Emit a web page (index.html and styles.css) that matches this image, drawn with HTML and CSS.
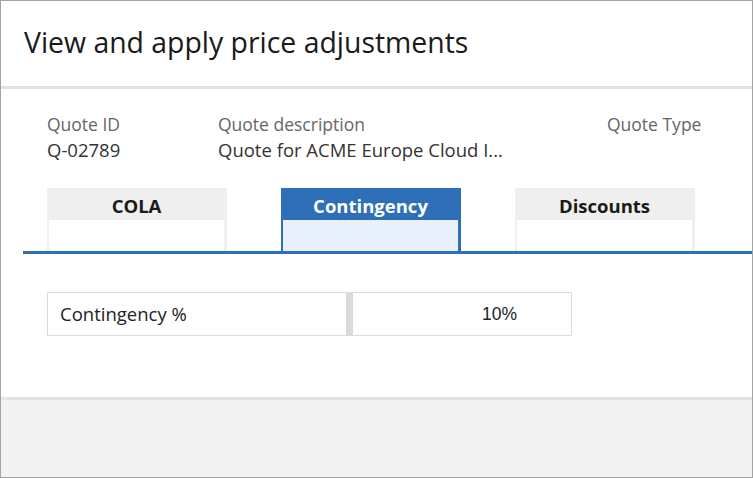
FILE: index.html
```html
<!DOCTYPE html>
<html>
<head>
<meta charset="utf-8">
<link rel="stylesheet" href="styles.css">
</head>
<body>
<div class="dialog">
  <div class="header">
    <h1 class="title">View and apply price adjustments</h1>
  </div>
  <div class="content">
    <div class="info">
      <div class="info-item id">
        <div class="label">Quote ID</div>
        <div class="value">Q-02789</div>
      </div>
      <div class="info-item desc">
        <div class="label">Quote description</div>
        <div class="value">Quote for ACME Europe Cloud I...</div>
      </div>
      <div class="info-item type">
        <div class="label">Quote Type</div>
        <div class="value">&nbsp;</div>
      </div>
    </div>
    <div class="tabstrip">
      <div class="tab"><div class="tab-head">COLA</div><div class="tab-body"></div></div>
      <div class="tab active"><div class="tab-head">Contingency</div><div class="tab-body"></div></div>
      <div class="tab"><div class="tab-head">Discounts</div><div class="tab-body"></div></div>
    </div>
    <div class="field">
      <div class="field-label">Contingency %</div>
      <div class="field-divider"></div>
      <div class="field-value">10%</div>
    </div>
  </div>
  <div class="footer"></div>
</div>
</body>
</html>
```

FILE: styles.css
```css
* { box-sizing: border-box; }
html, body { margin: 0; padding: 0; }
body {
  width: 753px;
  height: 478px;
  font-family: "Open Sans", "Noto Sans", sans-serif;
  background: #ffffff;
}
.dialog {
  width: 753px;
  height: 478px;
  border: 1px solid #a3a3a3;
  display: flex;
  flex-direction: column;
  background: #fff;
}
.header {
  height: 88px;
  flex: none;
  border-bottom: 3px solid #e1e1e1;
  padding-left: 23px;
  padding-top: 23px;
}
.title {
  margin: 0;
  font-weight: 400;
  font-size: 28.4px;
  line-height: 36px;
  color: #1a1a1a;
}
.content {
  flex: 1;
  display: flex;
  flex-direction: column;
  padding-top: 22px;
}
.info {
  display: flex;
  padding-left: 46px;
  height: 77px;
}
.info-item { font-size: 17.5px; line-height: 26px; white-space: nowrap; }
.info-item.id { width: 171px; }
.info-item.desc { width: 389px; }
.label { color: #666666; }
.value { color: #333333; font-size: 18.5px; }
.tabstrip {
  margin-left: 22px;
  padding-left: 24px;
  display: flex;
  gap: 54px;
  border-bottom: 3px solid #2e6fb7;
  height: 66px;
}
.tab {
  width: 180px;
  height: 63px;
  display: flex;
  flex-direction: column;
  background: #efefef;
  padding: 0 3px 0 2px;
}
.tab-head {
  height: 32px;
  flex: none;
  text-align: center;
  font-weight: 700;
  font-size: 18.5px;
  line-height: 36px;
  color: #1a1a1a;
}
.tab-body {
  flex: 1;
  background: #ffffff;
}
.tab.active { background: #2e6fb7; }
.tab.active .tab-head { color: #ffffff; }
.tab.active .tab-body { background: #e8f1fb; }
.field {
  margin-top: 38px;
  margin-left: 46px;
  width: 525px;
  height: 44px;
  border: 1px solid #dcdcdc;
  display: flex;
  align-items: stretch;
}
.field-label {
  width: 298px;
  padding-left: 12px;
  font-size: 18.5px;
  line-height: 42px;
  color: #222;
}
.field-divider {
  width: 7px;
  background: #dadada;
}
.field-value {
  flex: 1;
  text-align: right;
  padding-right: 54px;
  font-family: "Liberation Sans", Arial, sans-serif;
  font-size: 17.5px;
  line-height: 42px;
  color: #222;
}
.footer {
  height: 80px;
  flex: none;
  border-top: 3px solid #e3e3e3;
  background: #f2f2f2;
}
```
